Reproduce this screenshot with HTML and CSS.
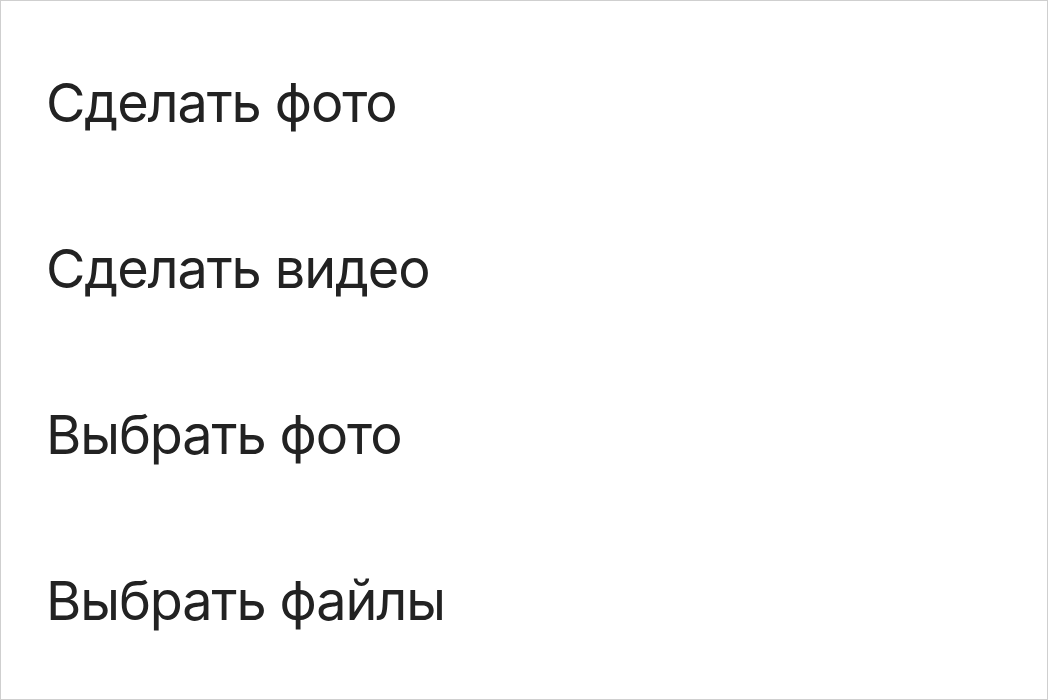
FILE: index.html
```html
<!DOCTYPE html>
<html lang="ru">
<head>
<meta charset="utf-8">
<link rel="stylesheet" href="styles.css">
</head>
<body>
<div class="sheet">
  <ul class="menu">
    <li class="menu-item">Сделать фото</li>
    <li class="menu-item">Сделать видео</li>
    <li class="menu-item">Выбрать фото</li>
    <li class="menu-item">Выбрать файлы</li>
  </ul>
</div>
</body>
</html>
```
FILE: styles.css
```css
html, body {
  margin: 0;
  padding: 0;
  background: #ffffff;
}
.sheet {
  box-sizing: border-box;
  width: 1048px;
  height: 700px;
  border: 1px solid #cfcfcf;
  background: #ffffff;
  padding-top: 19px;
}
.menu {
  list-style: none;
  margin: 0;
  padding: 0 0 0 45px;
}
.menu-item {
  font-family: Inter, "Noto Sans", sans-serif;
  font-size: 54px;
  line-height: 166px;
  color: #222222;
  letter-spacing: -1.1px;
}
```
